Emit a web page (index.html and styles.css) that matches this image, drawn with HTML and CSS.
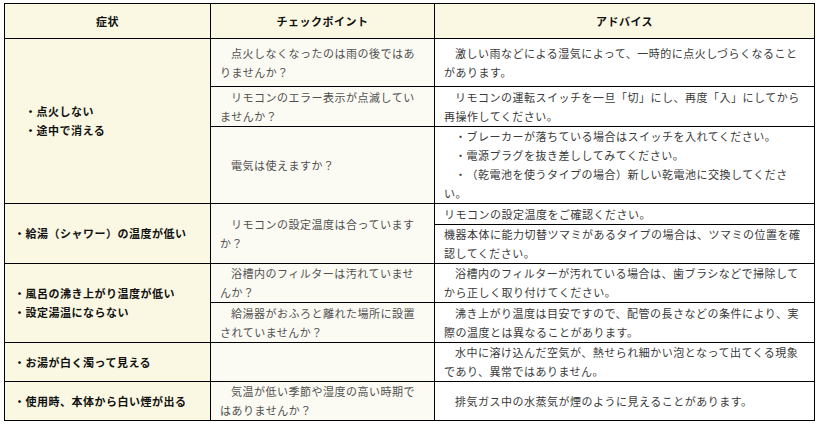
FILE: index.html
```html
<!DOCTYPE html>
<html lang="ja">
<head>
<meta charset="utf-8">
<title>症状とアドバイス</title>
<link rel="stylesheet" href="styles.css">
</head>
<body>
<table class="faq">
  <colgroup>
    <col class="c-sym">
    <col class="c-chk">
    <col class="c-adv">
  </colgroup>
  <thead>
    <tr class="h-head">
      <th>症状</th>
      <th>チェックポイント</th>
      <th>アドバイス</th>
    </tr>
  </thead>
  <tbody>
    <tr class="h-r1">
      <td class="sym" rowspan="3"><div class="ind">・点火しない</div><div class="ind">・途中で消える</div></td>
      <td class="chk">点火しなくなったのは雨の後ではありませんか？</td>
      <td class="adv">激しい雨などによる湿気によって、一時的に点火しづらくなることがあります。</td>
    </tr>
    <tr class="h-r2">
      <td class="chk">リモコンのエラー表示が点滅していませんか？</td>
      <td class="adv">リモコンの運転スイッチを一旦「切」にし、再度「入」にしてから再操作してください。</td>
    </tr>
    <tr class="h-r3">
      <td class="chk">電気は使えますか？</td>
      <td class="adv"><div>・ブレーカーが落ちている場合はスイッチを入れてください。</div><div>・電源プラグを抜き差ししてみてください。</div><div>・（乾電池を使うタイプの場合）新しい乾電池に交換してください。</div></td>
    </tr>
    <tr class="h-r4">
      <td class="sym" rowspan="2">・給湯（シャワー）の温度が低い</td>
      <td class="chk" rowspan="2">リモコンの設定温度は合っていますか？</td>
      <td class="adv flat">リモコンの設定温度をご確認ください。</td>
    </tr>
    <tr class="h-r5">
      <td class="adv flat">機器本体に能力切替ツマミがあるタイプの場合は、ツマミの位置を確認してください。</td>
    </tr>
    <tr class="h-r6">
      <td class="sym" rowspan="2"><div>・風呂の沸き上がり温度が低い</div><div>・設定湯温にならない</div></td>
      <td class="chk">浴槽内のフィルターは汚れていませんか？</td>
      <td class="adv">浴槽内のフィルターが汚れている場合は、歯ブラシなどで掃除してから正しく取り付けてください。</td>
    </tr>
    <tr class="h-r7">
      <td class="chk">給湯器がおふろと離れた場所に設置されていませんか？</td>
      <td class="adv">沸き上がり温度は目安ですので、配管の長さなどの条件により、実際の温度とは異なることがあります。</td>
    </tr>
    <tr class="h-r8">
      <td class="sym">・お湯が白く濁って見える</td>
      <td class="chk"></td>
      <td class="adv">水中に溶け込んだ空気が、熱せられ細かい泡となって出てくる現象であり、異常ではありません。</td>
    </tr>
    <tr class="h-r9">
      <td class="sym">・使用時、本体から白い煙が出る</td>
      <td class="chk">気温が低い季節や湿度の高い時期ではありませんか？</td>
      <td class="adv">排気ガス中の水蒸気が煙のように見えることがあります。</td>
    </tr>
  </tbody>
</table>
</body>
</html>
```

FILE: styles.css
```css
html, body {
  margin: 0;
  background: #ffffff;
}

body {
  padding: 3px 0 0 4px;
  font-family: "Noto Sans CJK JP", "Noto Sans", sans-serif;
  font-size: 11px;
  letter-spacing: 0.5px;
  line-height: 19px;
  color: #333333;
  text-spacing-trim: space-all;
}

.faq {
  border-collapse: collapse;
  table-layout: fixed;
  width: 810px;
}

.c-sym { width: 206px; }
.c-chk { width: 224px; }
.c-adv { width: 380px; }

.faq th,
.faq td {
  border: 1px solid #000000;
  padding: 0 9px;
  vertical-align: middle;
}

.faq th {
  background: #faf8e2;
  color: #111111;
  font-weight: bold;
  text-align: center;
}

.sym {
  background: #faf8e2;
  color: #111111;
  font-weight: bold;
  padding-left: 8px;
}

.sym .ind {
  text-indent: 1em;
}

.chk {
  background: #fbfaf3;
  color: #505050;
  text-indent: 1em;
}

.adv {
  background: #ffffff;
  color: #3a3a3a;
  text-indent: 1em;
  padding-left: 8px;
}

.adv.flat {
  text-indent: 0;
}

.h-head { height: 35px; }
.h-r1 { height: 48px; }
.h-r2 { height: 40px; }
.h-r3 { height: 77px; }
.h-r4 { height: 21px; }
.h-r5 { height: 38px; }
.h-r6 { height: 38px; }
.h-r7 { height: 40px; }
.h-r8 { height: 39px; }
.h-r9 { height: 39px; }
```
